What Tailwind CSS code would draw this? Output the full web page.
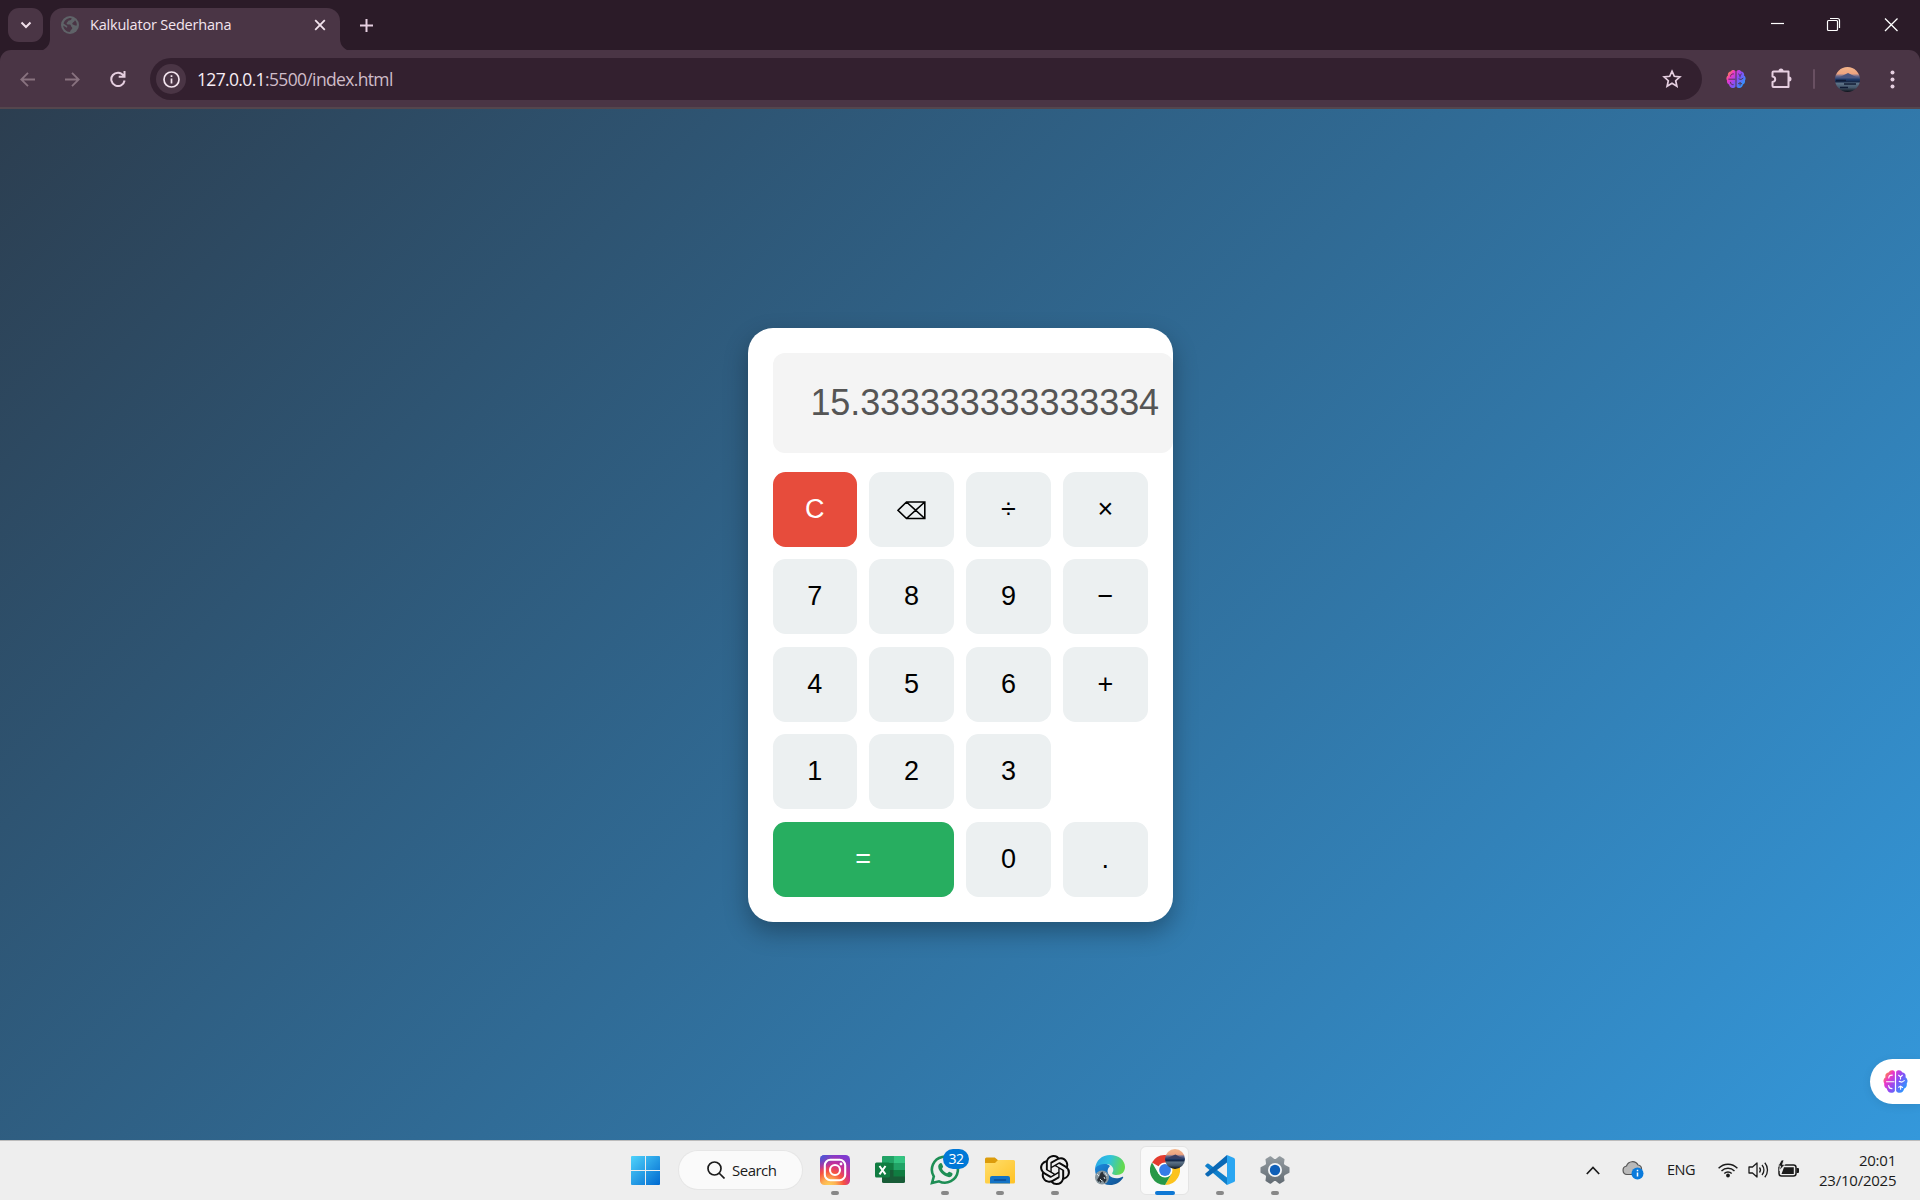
<!DOCTYPE html>
<html lang="id">
<head>
<meta charset="utf-8">
<title>Kalkulator Sederhana</title>
<script src="https://cdn.jsdelivr.net/npm/@tailwindcss/browser@4"></script>
</head>
<body class="w-[1920px] h-[1200px] overflow-hidden flex flex-col font-['Open_Sans',sans-serif] bg-[#2b1b28]">

<svg class="absolute w-0 h-0" aria-hidden="true">
  <defs>
    <linearGradient id="brainGrad" gradientUnits="userSpaceOnUse" x1="1" y1="3" x2="19" y2="16"><stop offset="0" stop-color="#ff9a2a"/><stop offset=".25" stop-color="#ee35c8"/><stop offset=".55" stop-color="#8a4df5"/><stop offset="1" stop-color="#1fa2ff"/></linearGradient>
    <linearGradient id="sunset" x1="0" y1="0" x2="0" y2="1"><stop offset="0" stop-color="#f3b58a"/><stop offset=".27" stop-color="#eda380"/><stop offset=".36" stop-color="#6b6b90"/><stop offset=".5" stop-color="#1e3a6a"/><stop offset=".58" stop-color="#172848"/><stop offset=".66" stop-color="#5c7186"/><stop offset=".82" stop-color="#43566a"/><stop offset="1" stop-color="#0c1018"/></linearGradient>
    <symbol id="brain" viewBox="0 0 20 20">
      <path fill="url(#brainGrad)" d="M9.500 2.200C8.200.4 5.300.8 4.700 2.600 2.700 2.800 1.400 4.600 2 6.500.3 7.600-.1 10.100 1 11.500.7 13.600 1.500 15 3 15.500c.5 2 1.800 3.500 3.500 3.500 1.300 0 2.500-.5 3-1.500zM10.500 2.200C11.800.4 14.700.8 15.300 2.600c2 .2 3.300 2 2.700 3.900 1.700 1.100 2.100 3.600 1 5 .3 2.100-.5 3.500-2 4-.5 2-1.800 3.500-3.500 3.500-1.300 0-2.500-.5-3-1.500z"/>
      <path fill="none" stroke="currentColor" stroke-width=".9" stroke-linecap="round" d="M2.800 10.200h6M4.600 7.200c0-1.600 1-2.300 2.800-2.300M4.500 13.300c.2 1.800 1 2.400 2.700 2.400M12.500 5l1.500 1.400L15.500 5M14 6.400V8M17 9.300l-2 1.200-2-.6M12.500 14.600l1.600-.8 1.600 1M14.100 13.800v2.400"/>
    </symbol>
  </defs>
</svg>

<!-- Tab strip -->
<header class="h-[50px] shrink-0 flex items-start bg-[#2b1b28]">
  <button class="mt-2 ml-2 w-[35px] h-[34px] rounded-[11px] bg-[#4a3545] flex items-center justify-center">
    <svg class="w-3 h-3" viewBox="0 0 12 12" fill="none" stroke="#f1dfea" stroke-width="2"><path d="M1.500 3.500 6 8l4.500-4.500"/></svg>
  </button>
  <div class="relative ml-[7px] mt-[7.500px] w-[290px] h-[43px] rounded-t-[13px] bg-[#4a3545] flex items-center pl-[11px] pr-[14px]">
    <svg class="absolute -left-[12px] bottom-0 w-3 h-3" viewBox="0 0 12 12"><path fill="#4a3545" d="M12 0v12H0A12 12 0 0 0 12 0"/></svg>
    <svg class="absolute -right-[12px] bottom-0 w-3 h-3" viewBox="0 0 12 12"><path fill="#4a3545" d="M0 0v12h12A12 12 0 0 1 0 0"/></svg>
    <svg class="w-[18px] h-[18px] -mt-[9px]" viewBox="0 0 18 18"><circle cx="9" cy="9" r="9" fill="#5f6368"/><path fill="#4a3545" d="M10.500 2c.3 1.300-.8 2.300-2.300 2.500C6.800 4.800 7 6 6 6.500 5.200 7 5.700 8.600 7 8.500c1.800-.2 2.800 0 3 1.500.1 1 1.200 1 1.300 2 .1 1.300-1.600 1.600-1.800 2.800-.1.700-.4 1.200-.9 1.200-3.200-.2-6.200-3-6.400-6.500l3.600 2.300c.7-.3.700-1.600 0-2L2.500 7.500C3.200 4.500 6 1.800 10.500 2M12 6.500c-1.300.8-.8 2 .5 2.300 1 .2 1.700 1.200 3.300.6.2-2.200-.5-3.800-1.800-5.200-.3 1-1 1.700-2 2.300"/></svg>
    <span class="ml-[11px] -mt-[8px] text-[14.500px] tracking-[-0.200px] text-[#f3e4ee] whitespace-nowrap">Kalkulator Sederhana</span>
    <svg class="ml-auto w-[12px] h-[12px] -mt-[9px]" viewBox="0 0 12 12" stroke="#f3e4ee" stroke-width="1.800"><path d="m1.200 1.200 9.600 9.600m0-9.600-9.600 9.600"/></svg>
  </div>
  <svg class="ml-[20px] mt-[18.500px] w-[13px] h-[13px]" viewBox="0 0 13 13" stroke="#e6cfe0" stroke-width="2"><path d="M6.500 0v13M0 6.500h13"/></svg>
  <div class="ml-auto flex text-white">
    <svg class="w-[57px] h-12" viewBox="0 0 57 48" stroke="#fff" stroke-width="1.200"><path d="M22 23.500h13"/></svg>
    <svg class="w-[57px] h-12" viewBox="0 0 57 48" fill="none" stroke="#fff" stroke-width="1.200"><rect x="21.500" y="20.500" width="10" height="10" rx="1"/><path d="M24 18.500h7.500q2 0 2 2v7.500"/></svg>
    <svg class="w-[57px] h-12" viewBox="0 0 57 48" stroke="#fff" stroke-width="1.300"><path d="m22 18.500 12.500 12.500m0-12.500L22 31"/></svg>
  </div>
</header>

<!-- Toolbar -->
<nav class="h-[59px] shrink-0 rounded-t-[11px] bg-[#4a3545] border-b-2 border-[#54464d] flex items-center pt-px">
  <svg class="ml-[20px] w-[15px] h-[15px]" viewBox="0 0 15 15" fill="none" stroke="#88727f" stroke-width="1.800"><path d="M15 7.500H1.500M8 .8 1.300 7.500 8 14.200"/></svg>
  <svg class="ml-[30px] w-[15px] h-[15px]" viewBox="0 0 15 15" fill="none" stroke="#88727f" stroke-width="1.800"><path d="M0 7.500h13.500M7 .8l6.700 6.700L7 14.200"/></svg>
  <svg class="ml-[30px] w-[16px] h-[16px]" viewBox="0 0 16 16" fill="none" stroke="#e6cfe0" stroke-width="2"><path d="M13.500 4.500A6.700 6.700 0 1 0 14.600 9.500M14.500 0v5.800H8.700"/></svg>
  <div class="ml-[24px] w-[1552px] h-[42px] rounded-full bg-[#33202f] flex items-center">
    <div class="ml-[6px] w-[30px] h-[30px] rounded-full bg-[#4a3545] flex items-center justify-center">
      <svg class="w-[17px] h-[17px]" viewBox="0 0 17 17" fill="none" stroke="#f3e4ee" stroke-width="1.700"><circle cx="8.500" cy="8.500" r="7.500"/><path d="M8.500 7.500v5M8.500 4.300v1.800"/></svg>
    </div>
    <span class="ml-[11px] text-[17.500px] tracking-[-0.650px] text-[#cfbcc9] whitespace-nowrap"><span class="text-[#f8edf5]">127.0.0.1</span>:5500/index.html</span>
    <svg class="ml-auto mr-[20px] w-[20px] h-[20px]" viewBox="0 0 20 20" fill="none" stroke="#e6cfe0" stroke-width="1.700"><path d="m10 2.200 2.300 5.100 5.600.6-4.200 3.800 1.200 5.500-4.900-2.900-4.900 2.900 1.200-5.500-4.200-3.800 5.600-.6z"/></svg>
  </div>
  <svg class="ml-[24px] w-[20px] h-[20px] text-[#4a3545]"><use href="#brain"/></svg>
  <svg class="ml-[25px] -mt-[3px] w-[22px] h-[22px]" viewBox="0 0 22 22" fill="none" stroke="#e6cfe0" stroke-width="2" stroke-linejoin="round"><path d="M2.500 4.500h15V20h-15q-1 0-1-1v-4c3.600-.5 3.600-5 0-5.500V5.500q0-1 1-1z"/><path fill="#e6cfe0" stroke="none" d="M7.500 4a2.500 2.500 0 0 1 5 0zM18 9.500a2.500 2.500 0 0 1 0 5z"/></svg>
  <i class="ml-[20px] w-[2px] h-[20px] bg-[#695062] rounded"></i>
  <svg class="ml-[20px] w-[25px] h-[25px]" viewBox="0 0 25 25"><circle cx="12.500" cy="12.500" r="12.500" fill="url(#sunset)"/><path fill="#4a5580" d="m5 10 5-2.500 3-1.500 3 1.500 5 2.500z"/><path stroke="#101b35" stroke-width="1.500" d="M1 13.500h10M9 17h12M5 20.500h8"/></svg>
  <svg class="ml-[30px] w-[5px] h-[19px]" viewBox="0 0 5 19" fill="#e6cfe0"><circle cx="2.500" cy="2.500" r="2"/><circle cx="2.500" cy="9.500" r="2"/><circle cx="2.500" cy="16.500" r="2"/></svg>
</nav>

<!-- Page -->
<main class="relative h-[1031px] shrink-0 flex justify-center items-center bg-[linear-gradient(135deg,#2c3e50,#3498db)] font-['Liberation_Sans',Arial,sans-serif]">
  <section class="w-[425px] h-[594px] rounded-[25px] bg-white p-[25px] overflow-hidden shadow-[0_10px_25px_rgba(0,0,0,0.3)]">
    <div class="w-[400px] h-[100px] rounded-[12px] bg-[#f4f4f4] text-[#555] text-[36px] leading-none tracking-[-0.100px] flex items-center justify-end pr-[13.500px]">15.333333333333334</div>
    <div class="mt-[19px] grid grid-cols-4 gap-[12.500px] text-[27px] leading-none text-black">
      <button class="h-[75px] rounded-[12.500px] bg-[#e74c3c] text-white">C</button>
      <button class="h-[75px] rounded-[12.500px] bg-[#ecf0f1] flex items-center justify-center"><svg class="mt-[3px] w-[29px] h-[19px]" viewBox="0 0 29 19" fill="none" stroke="#000" stroke-width="1.600"><path d="M9.500 1h18.300v16.500H9.500L1 9.300zM9.500 1l18.300 16.500M27.800 1 9.500 17.500"/></svg></button>
      <button class="h-[75px] rounded-[12.500px] bg-[#ecf0f1]">÷</button>
      <button class="h-[75px] rounded-[12.500px] bg-[#ecf0f1]">×</button>
      <button class="h-[75px] rounded-[12.500px] bg-[#ecf0f1] pb-px">7</button>
      <button class="h-[75px] rounded-[12.500px] bg-[#ecf0f1] pb-px">8</button>
      <button class="h-[75px] rounded-[12.500px] bg-[#ecf0f1] pb-px">9</button>
      <button class="h-[75px] rounded-[12.500px] bg-[#ecf0f1] pb-px">−</button>
      <button class="h-[75px] rounded-[12.500px] bg-[#ecf0f1]">4</button>
      <button class="h-[75px] rounded-[12.500px] bg-[#ecf0f1]">5</button>
      <button class="h-[75px] rounded-[12.500px] bg-[#ecf0f1]">6</button>
      <button class="h-[75px] rounded-[12.500px] bg-[#ecf0f1]">+</button>
      <button class="h-[75px] rounded-[12.500px] bg-[#ecf0f1] pb-px">1</button>
      <button class="h-[75px] rounded-[12.500px] bg-[#ecf0f1] pb-px">2</button>
      <button class="h-[75px] rounded-[12.500px] bg-[#ecf0f1] pb-px">3</button>
      <button class="col-span-2 col-start-1 h-[75px] rounded-[12.500px] bg-[#27ae60] text-white">=</button>
      <button class="h-[75px] rounded-[12.500px] bg-[#ecf0f1]">0</button>
      <button class="h-[75px] rounded-[12.500px] bg-[#ecf0f1]">.</button>
    </div>
  </section>
  <div class="absolute right-0 top-[950px] w-[50px] h-[45px] rounded-l-full bg-white flex items-center pl-[13px] shadow-[0_2px_10px_rgba(0,0,0,0.08)]">
    <svg class="w-[25px] h-[25px] text-white"><use href="#brain"/></svg>
  </div>
</main>

<!-- Taskbar -->
<footer class="h-[60px] shrink-0 bg-[#eeeeee] border-t border-[#bcbcbc] flex items-center pl-[618px] pb-px text-[#1b1b1b]">
  <div class="w-[55px] flex justify-center">
    <svg class="w-[29px] h-[29px]" viewBox="0 0 29 29"><defs><linearGradient id="win" gradientUnits="userSpaceOnUse" x1="0" y1="0" x2="29" y2="29"><stop stop-color="#4fd3fb"/><stop offset="1" stop-color="#0069d0"/></linearGradient></defs><path fill="url(#win)" d="M1 0h13v14H0V1q0-1 1-1M15 0h13q1 0 1 1v13H15zM0 15h14v14H1q-1 0-1-1zM15 15h14v13q0 1-1 1H15z"/></svg>
  </div>
  <div class="ml-[6px] w-[123px] h-[38px] rounded-full bg-[#fafafa] ring-1 ring-[#e6e6e6] flex items-center pl-[28px] gap-[7px]">
    <svg class="w-[18px] h-[18px]" viewBox="0 0 18 18" fill="none" stroke="#1b1b1b" stroke-width="1.700"><circle cx="7.500" cy="7.500" r="6.500"/><path d="m12 12 5.500 5.500"/></svg>
    <span class="text-[15px] tracking-[-0.500px]">Search</span>
  </div>
  <div class="relative ml-[5px] w-[55px] h-[59px] flex items-center justify-center">
    <svg class="w-[30px] h-[30px]" viewBox="0 0 30 30"><defs><radialGradient id="ig" cx=".3" cy="1.050" r="1.100"><stop offset="0" stop-color="#fed65b"/><stop offset=".22" stop-color="#fdb052"/><stop offset=".45" stop-color="#f7543f"/><stop offset=".68" stop-color="#cc2e92"/><stop offset="1" stop-color="#7f3bd0"/></radialGradient><radialGradient id="ig2" cx="0" cy="0" r=".5"><stop offset="0" stop-color="#3f5bd8"/><stop offset="1" stop-color="#3f5bd8" stop-opacity="0"/></radialGradient></defs><rect width="30" height="30" rx="4.500" fill="url(#ig)"/><rect width="30" height="30" rx="4.500" fill="url(#ig2)"/><g fill="none" stroke="#fff" stroke-width="2.100"><rect x="4.800" y="4.800" width="20.400" height="20.400" rx="5.500"/><circle cx="15" cy="15" r="5"/></g><circle cx="21" cy="9" r="1.400" fill="#fff"/></svg>
    <i class="absolute bottom-[5px] w-2 h-1 rounded-full bg-[#888]"></i>
  </div>
  <div class="relative w-[55px] h-[59px] flex items-center justify-center">
    <svg class="w-[30px] h-[30px]" viewBox="0 0 30 30"><rect x="7" y="1" width="23" height="27" rx="1.500" fill="#185c37"/><path fill="#21a366" d="M8.500 1h10v7H7V2.500Q7 1 8.500 1"/><path fill="#33c481" d="M18.500 1h10q1.500 0 1.500 1.500V8H18.500z"/><path fill="#107c41" d="M7 8h11.500v7H7zM18.500 15H30v6.500H18.500z"/><path fill="#21a366" d="M18.500 8H30v7H18.500z"/><rect y="7.500" width="15" height="15" rx="1.500" fill="#107c41"/><path stroke="#fff" stroke-width="2" d="m4.500 11 6 8.300M10.500 11l-6 8.300"/></svg>
  </div>
  <div class="relative w-[55px] h-[59px] flex items-center justify-center">
    <svg class="w-[30px] h-[30px]" viewBox="0 0 30 30"><path fill="none" stroke="#1e8e55" stroke-width="2.600" d="m2 28 1.800-6.500A13 13 0 1 1 9 26.300z"/><path fill="#1e8e55" d="M10.300 8.200c.8-.3 1.500 0 1.800.8l1 2.400c.2.800-1.300 1.900-1 2.500 1.200 2.100 2.600 3.400 4.800 4.400.8.300 1.700-1.800 2.500-1.500l2.700 1.300c1 .6.200 2.800-.9 3.500-2.300 1.400-5.500 0-8.200-2-2.300-2-4.800-4.900-4.800-7.900 0-1.700 1-3.100 2.100-3.500"/></svg>
    <span class="absolute left-[26px] top-[8px] w-[26px] h-[20px] rounded-full bg-[#0078d7] text-white text-[14px] leading-[20px] tracking-[-0.500px] text-center">32</span>
    <i class="absolute bottom-[5px] w-2 h-1 rounded-full bg-[#888]"></i>
  </div>
  <div class="relative w-[55px] h-[59px] flex items-center justify-center">
    <svg class="w-[30px] h-[30px]" viewBox="0 0 30 30"><defs><linearGradient id="fo" x1="0" y1="0" x2="1" y2="1"><stop stop-color="#ffde6c"/><stop offset="1" stop-color="#ffc225"/></linearGradient></defs><path fill="#dc9c0b" d="M0 4q0-1.500 1.500-1.500h8.300l3 2.500H20v5H0z"/><path fill="url(#fo)" d="M0 8h10l3-3h15.500Q30 5 30 6.500V27q0 1.500-1.500 1.500h-27Q0 28.500 0 27z"/><path fill="#1473c5" d="M5 28.500V23q0-2 2-2h16q2 0 2 2v5.500z"/><path stroke="#0b4c92" stroke-width="1.400" stroke-linecap="round" d="M9.500 25h11"/></svg>
    <i class="absolute bottom-[5px] w-2 h-1 rounded-full bg-[#888]"></i>
  </div>
  <div class="relative w-[55px] h-[59px] flex items-center justify-center">
    <svg class="w-[30px] h-[30px]" viewBox="0 0 24 24" fill="#0a0a0a"><path d="M22.282 9.821a5.985 5.985 0 0 0-.516-4.910 6.046 6.046 0 0 0-6.510-2.900A6.065 6.065 0 0 0 4.981 4.182a5.985 5.985 0 0 0-3.998 2.900 6.046 6.046 0 0 0 .743 7.097 5.980 5.980 0 0 0 .510 4.911 6.051 6.051 0 0 0 6.515 2.900A5.985 5.985 0 0 0 13.260 24a6.056 6.056 0 0 0 5.772-4.206 5.990 5.990 0 0 0 3.998-2.900 6.056 6.056 0 0 0-.748-7.073zM13.260 22.430a4.476 4.476 0 0 1-2.876-1.041l.141-.080 4.779-2.758a.795.795 0 0 0 .393-.681v-6.737l2.020 1.169a.071.071 0 0 1 .038.052v5.583a4.504 4.504 0 0 1-4.495 4.493zM3.600 18.304a4.471 4.471 0 0 1-.535-3.014l.142.085 4.783 2.758a.771.771 0 0 0 .781 0l5.843-3.368v2.332a.080.080 0 0 1-.033.062L9.740 19.950a4.499 4.499 0 0 1-6.140-1.646zM2.341 7.896a4.485 4.485 0 0 1 2.366-1.973V11.600a.766.766 0 0 0 .388.677l5.815 3.354-2.020 1.169a.076.076 0 0 1-.071 0l-4.831-2.787A4.504 4.504 0 0 1 2.341 7.872zm16.597 3.856L13.104 8.364l2.015-1.164a.076.076 0 0 1 .071 0l4.830 2.791a4.494 4.494 0 0 1-.676 8.105v-5.678a.790.790 0 0 0-.406-.666zm2.010-3.024-.142-.085-4.773-2.782a.776.776 0 0 0-.786 0L9.409 9.230V6.897a.066.066 0 0 1 .029-.061l4.830-2.787a4.499 4.499 0 0 1 6.680 4.660zM8.307 12.863l-2.020-1.164a.080.080 0 0 1-.038-.057V6.075a4.499 4.499 0 0 1 7.376-3.454l-.142.081-4.779 2.758a.795.795 0 0 0-.393.681zm1.097-2.366 2.602-1.499 2.607 1.499v3l-2.597 1.499-2.608-1.499z"/></svg>
    <i class="absolute bottom-[5px] w-2 h-1 rounded-full bg-[#888]"></i>
  </div>
  <div class="relative w-[55px] h-[59px] flex items-center justify-center">
    <svg class="w-[30px] h-[30px]" viewBox="0 0 30 30"><defs><linearGradient id="ed1" x1="0" y1="0" x2="1" y2=".2"><stop stop-color="#2aa5e8"/><stop offset=".5" stop-color="#2fc2df"/><stop offset="1" stop-color="#63d94f"/></linearGradient><linearGradient id="ed2" x1="0" y1="0" x2="1" y2="1"><stop stop-color="#1a8be0"/><stop offset="1" stop-color="#11508f"/></linearGradient></defs><path fill="url(#ed2)" d="M0 14C1 8 10 7 15 11c-3 3-3 6-1 9 3 4 9 4 13 2 1-.5 1.500 0 1 1-3 4.500-7.500 7-13 7C6.500 30 0 23 0 14"/><path fill="url(#ed1)" d="M0 14C1 5 7 0 15 0c9 0 15 5.500 15 12 0 5-3.500 8-8.500 8-3.500 0-5-1-4-2.500C20 14 17 9 11 9 5 9 1 11 0 14"/><circle cx="7" cy="22.500" r="7" fill="#8898a0"/><path fill="#2a3138" d="M2 25l2.500-4 1-3 2-1.500 1 2.500 2 2 1 4-2 3-2-3-2 3-1-2-1 1z"/><path stroke="#d8e1e6" d="m2 19 2 2M10 18l2 3M5 24l2 2M9 22l1 2"/></svg>
  </div>
  <div class="relative w-[55px] h-[59px] flex items-center justify-center">
    <div class="absolute left-[3px] top-[5px] w-[49px] h-[49px] rounded-[6px] bg-[#f9f9f9] border border-[#e4e4e4]"></div>
    <svg class="relative w-[30px] h-[30px]" viewBox="0 0 30 30"><path fill="#e33b2e" d="M15 15 2 7.500A15 15 0 0 1 28 7.500z"/><path fill="#fcc31e" d="M28 7.500A15 15 0 0 1 15 30l6.500-11.300L15 7.500z"/><path fill="#279847" d="M2 7.500A15 15 0 0 0 15 30l6.500-11.300L8.500 18.800z"/><circle cx="15" cy="15" r="7.500" fill="#fff"/><circle cx="15" cy="15" r="5.900" fill="#357ce8"/></svg>
    <svg class="absolute left-[28px] top-[8px] w-[20px] h-[20px]" viewBox="0 0 25 25"><circle cx="12.500" cy="12.500" r="12.500" fill="url(#sunset)"/><path fill="#3b4065" d="m2 12 6-3 5-2 4 2 6 3z"/></svg>
    <i class="absolute bottom-[5px] w-5 h-1 rounded-full bg-[#0f78d4]"></i>
  </div>
  <div class="relative w-[55px] h-[59px] flex items-center justify-center">
    <svg class="w-[30px] h-[30px]" viewBox="0 0 30 30"><path fill="#0f7fcb" d="M.5 10.300 2 8.800q.8-.7 1.700 0L22 22.500V30L.4 11.500q-.6-.6.100-1.200"/><path fill="#0a68b5" d="M.5 19.700 2 21.200q.8.700 1.700 0L22 7.500V0L.4 18.500q-.6.600.1 1.200"/><path fill="#2aa6f2" d="m22 0 7 3q1 .5 1 1.500v21q0 1-1 1.500l-7 3z"/></svg>
    <i class="absolute bottom-[5px] w-2 h-1 rounded-full bg-[#888]"></i>
  </div>
  <div class="relative w-[55px] h-[59px] flex items-center justify-center">
    <svg class="w-[30px] h-[30px]" viewBox="0 0 30 30"><defs><linearGradient id="gear" x1="0" y1="0" x2="0" y2="1"><stop stop-color="#929a9f"/><stop offset="1" stop-color="#646d75"/></linearGradient></defs><path fill="url(#gear)" stroke="url(#gear)" stroke-width="2" stroke-linejoin="round" d="M10.500 2.200 14 5h2l3.500-2.800 4 2.300-.6 4.300 1.200 1.900 4.400 2.100v4.400l-4.400 2.100-1.200 1.900.6 4.300-4 2.300L16 25h-2l-3.500 2.800-4-2.300.6-4.300-1.200-1.900-4.400-2.100v-4.400l4.400-2.100 1.200-1.900-.6-4.300z"/><circle cx="15" cy="15" r="7" fill="#f4f6f8"/><circle cx="15" cy="15" r="5.200" fill="#0f5fb8"/></svg>
    <i class="absolute bottom-[5px] w-2 h-1 rounded-full bg-[#888]"></i>
  </div>

  <div class="ml-auto flex items-center pr-[24px]">
    <svg class="w-[14px] h-[9px]" viewBox="0 0 14 9" fill="none" stroke="#1b1b1b" stroke-width="1.700"><path d="M.8 8 7 1.500 13.200 8"/></svg>
    <svg class="ml-[22px] w-[22px] h-[20px]" viewBox="0 0 22 20"><path fill="#b9b9b9" stroke="#555" stroke-width="1.200" d="M5 14.500a4.300 4.300 0 0 1-.5-8.500A6.300 6.300 0 0 1 16 5a4 4 0 0 1 3.500 4L13 14.500z"/><circle cx="15.500" cy="13.500" r="6" fill="#0a7bdc"/><path stroke="#fff" stroke-width="1.500" d="M15.500 12.500v4M15.500 9.800v1.500"/></svg>
    <span class="ml-[23px] w-[29px] text-[14.500px] tracking-[-0.500px]">ENG</span>
    <svg class="ml-[22px] w-[20px] h-[16px]" viewBox="0 0 20 16" fill="none" stroke="#1b1b1b" stroke-width="1.400"><path d="M.6 6.300a13 13 0 0 1 18.800 0M3.500 9a9.200 9.200 0 0 1 13 0M6.300 11.500a5.200 5.200 0 0 1 7.400 0"/><circle cx="10" cy="13.500" r="1.200" fill="#1b1b1b"/></svg>
    <svg class="ml-[10px] w-[21px] h-[18px]" viewBox="0 0 21 18" fill="none" stroke="#1b1b1b" stroke-width="1.300" stroke-linejoin="round"><path d="M1 6h3.500l4.500-4v14l-4.500-4H1zM11.500 6.500a4 4 0 0 1 0 5M14 4a7.500 7.500 0 0 1 0 10M16.800 1.800a11 11 0 0 1 0 14.400"/></svg>
    <svg class="ml-[9px] -mt-[3px] w-[21px] h-[17px]" viewBox="0 0 21 17"><rect x="1" y="5" width="17" height="11" rx="2.500" fill="none" stroke="#1b1b1b" stroke-width="1.500"/><path fill="#1b1b1b" d="M3.500 14 6 7.200h9.800V14zM18.500 8H20q1 0 1 1v3q0 1-1 1h-1.500z"/><path fill="#1b1b1b" stroke="#eee" stroke-width=".8" d="M3.500 0 0 6h2.500L1.500 10.500 7 4.500H4.500L6 0z"/></svg>
    <div class="ml-[20px] w-[77px] text-right text-[15px] leading-[20px] tracking-[-0.230px] whitespace-nowrap"><div>20:01</div><div>23/10/2025</div></div>
  </div>
</footer>
</body>
</html>
